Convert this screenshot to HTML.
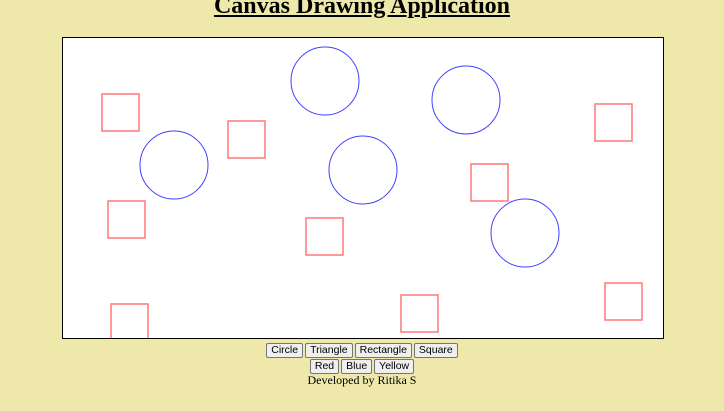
<!DOCTYPE html>
<html><head><style>
body{margin:0;background:#eee8aa;width:724px;height:411px;overflow:hidden;position:relative;font-family:"Liberation Serif",serif}
h1{position:absolute;top:-10px;left:0;width:724px;text-align:center;margin:0;font-size:24px;text-decoration:underline;font-weight:bold;line-height:32px}
svg{position:absolute;left:62px;top:37px}
.btns{position:absolute;left:0;width:724px;text-align:center;font-family:"Liberation Sans",sans-serif;font-size:10.5px}
button{font:inherit;font-size:10.5px;padding:1px 4px;margin:0 1px;border:1px solid #767676;border-radius:2px;background:#efefef;height:15px;line-height:11px;color:#000}
.dev{position:absolute;top:373px;width:724px;text-align:center;font-size:12px}
</style></head><body>
<h1>Canvas Drawing Application</h1>
<svg width="602" height="302">
<rect x="0.5" y="0.5" width="601" height="301" fill="#fff" stroke="#000"/>
<g fill="none" stroke="#ff8080" stroke-width="1.6">
<rect x="40" y="57" width="37" height="37"/>
<rect x="166" y="84" width="37" height="37"/>
<rect x="533" y="67" width="37" height="37"/>
<rect x="46" y="164" width="37" height="37"/>
<rect x="409" y="127" width="37" height="37"/>
<rect x="244" y="181" width="37" height="37"/>
<rect x="339" y="258" width="37" height="37"/>
<rect x="543" y="246" width="37" height="37"/>
<rect x="49" y="267" width="37" height="37"/>
</g>
<g fill="none" stroke="#4040ff" stroke-width="1">
<circle cx="263" cy="44" r="34"/>
<circle cx="112" cy="128" r="34"/>
<circle cx="404" cy="63" r="34"/>
<circle cx="301" cy="133" r="34"/>
<circle cx="463" cy="196" r="34"/>
</g>
<rect x="0.5" y="0.5" width="601" height="301" fill="none" stroke="#000"/>
</svg>
<div class="btns" style="top:343px"><button>Circle</button><button>Triangle</button><button>Rectangle</button><button>Square</button></div>
<div class="btns" style="top:359px"><button>Red</button><button>Blue</button><button>Yellow</button></div>
<div class="dev">Developed by Ritika S</div>
</body></html>
